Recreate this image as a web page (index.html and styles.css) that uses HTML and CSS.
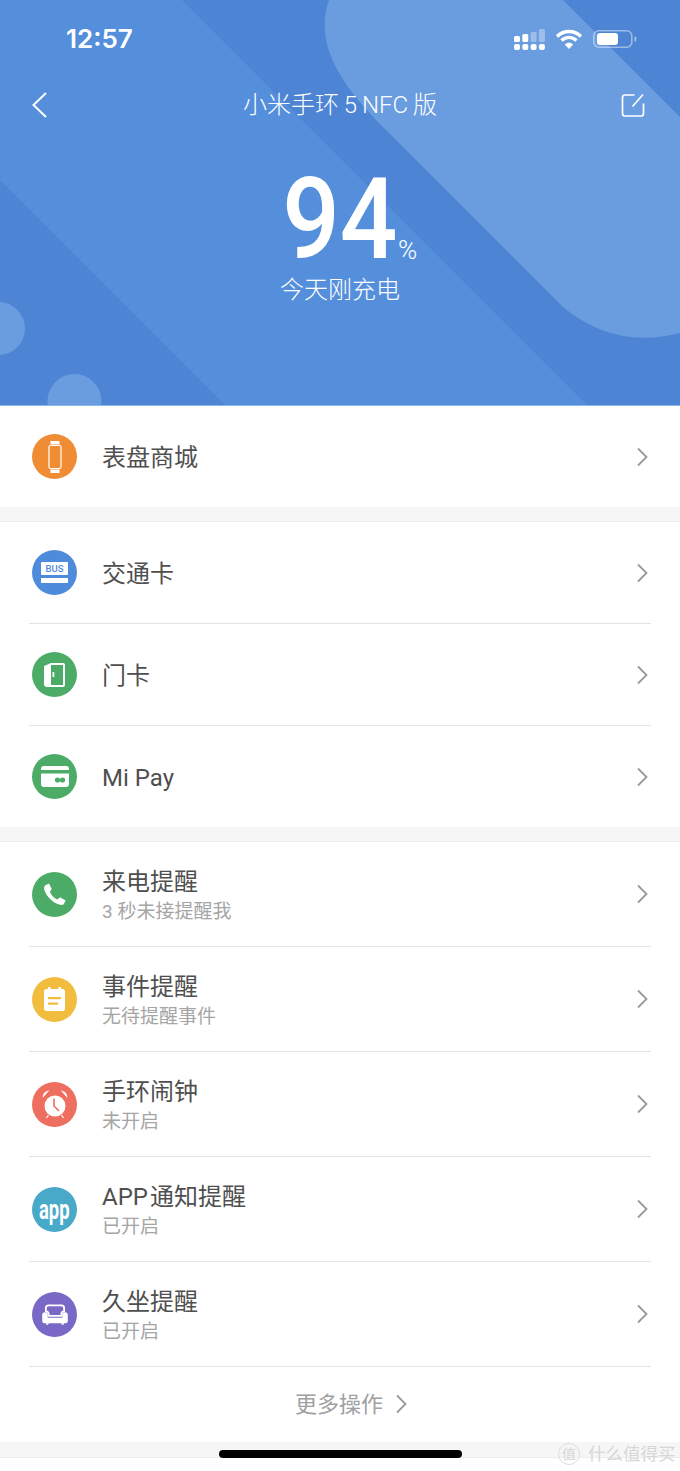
FILE: index.html
```html
<!DOCTYPE html>
<html lang="zh-CN">
<head>
    <meta charset="UTF-8">
    <meta name="viewport" content="width=device-width, initial-scale=1.0">
    <title>小米手环5 NFC版</title>
    <link rel="stylesheet" href="styles.css">
</head>
<body>

    <header class="hero">
        <svg class="hero-bg" width="680" height="405" viewBox="0 0 680 405">
            <rect width="680" height="405" fill="#4d84d3"/>
            <path d="M0 0H182L587 405H225L0 180Z" fill="#558fdc"/>
            <path d="M329 0H563L680 117V333Q615 350 563 307L385 129C335 80 315 40 329 0Z" fill="#6a9ce0"/>
            <circle cx="-1.500" cy="328.500" r="26.500" fill="#6a9ce0"/>
            <circle cx="74.500" cy="401" r="27" fill="#6a9ce0"/>
        </svg>

        <div class="status-bar">
            <span class="time">12:57</span>
            <div class="status-icons">
                <svg width="31" height="21" viewBox="0 0 31 21">
                    <g fill="#fff">
                        <rect x="0" y="7" width="6" height="6" rx="1.500"/>
                        <rect x="8.300" y="5" width="6" height="8" rx="1.500"/>
                        <rect x="0" y="15" width="6" height="6" rx="2"/>
                        <rect x="8.300" y="15" width="6" height="6" rx="2"/>
                        <rect x="16.600" y="15" width="6" height="6" rx="2"/>
                        <rect x="24.900" y="15" width="6" height="6" rx="2"/>
                    </g>
                    <g fill="#fff" opacity="0.35">
                        <rect x="16.600" y="3" width="6" height="10" rx="1.500"/>
                        <rect x="24.900" y="0" width="6" height="13" rx="1.500"/>
                    </g>
                </svg>
                <svg width="28" height="20" viewBox="0 0 28 20">
                    <path d="M2 7.500C9 .8 19 .8 26 7.500M6.500 11.500C11 7.300 17 7.300 21.500 11.500" fill="none" stroke="#fff" stroke-width="3.400"/>
                    <path d="M14 20L9.800 15.400C12.200 13.300 15.800 13.300 18.200 15.400Z" fill="#fff"/>
                </svg>
                <svg width="44" height="18" viewBox="0 0 44 18">
                    <rect x="0.800" y="0.800" width="38" height="16.400" rx="5" fill="none" stroke="#fff" stroke-opacity="0.45" stroke-width="1.600"/>
                    <rect x="4" y="3" width="21" height="12" rx="3" fill="#fff"/>
                    <rect x="41.500" y="6.500" width="1.800" height="5" rx="0.900" fill="#fff" fill-opacity="0.5"/>
                </svg>
            </div>
        </div>

        <nav class="nav-bar">
            <svg class="nav-back" width="24" height="28" viewBox="0 0 24 28">
                <path d="M16 2L3.500 14L16 26" fill="none" stroke="#fff" stroke-width="2"/>
            </svg>
            <span class="nav-title">小米手环 5 NFC 版</span>
            <svg class="nav-edit" width="24" height="24" viewBox="0 0 24 24">
                <path d="M13.500 2H4Q1.500 2 1.500 4.500V20.500Q1.500 23 4 23H20Q22.500 23 22.500 20.500V10.500" fill="none" stroke="#fff" stroke-width="1.700"/>
                <path d="M11.500 13.500L22 1.500" fill="none" stroke="#fff" stroke-width="1.700"/>
            </svg>
        </nav>

        <div class="battery">
            <div class="battery-value"><span class="battery-digits">94</span><span class="battery-unit">%</span></div>
            <div class="battery-label">今天刚充电</div>
        </div>
    </header>

    <section class="group group-first">
        <div class="row row-short">
            <span class="icon icon-orange">
                <svg width="14" height="32" viewBox="0 0 14 32">
                    <path d="M2.500 0H11.500V3.500H2.500ZM2.500 28.500H11.500V32H2.500Z" fill="#fff"/>
                    <rect x="1" y="4.500" width="12" height="23" rx="1.500" fill="none" stroke="#fff" stroke-width="1.200"/>
                </svg>
            </span>
            <span class="title">表盘商城</span>
            <svg class="chevron" width="12" height="20" viewBox="0 0 12 20"><path d="M2 1.500L10.500 10L2 18.500"/></svg>
        </div>
    </section>

    <section class="group">
        <div class="row row-short">
            <span class="icon icon-blue">
                <svg width="27" height="21" viewBox="0 0 27 21">
                    <rect width="27" height="13" rx="1" fill="#fff"/>
                    <rect y="16" width="27" height="5" fill="#fff"/>
                    <text class="bus-text" x="13.500" y="10">BUS</text>
                </svg>
            </span>
            <span class="title">交通卡</span>
            <svg class="chevron" width="12" height="20" viewBox="0 0 12 20"><path d="M2 1.500L10.500 10L2 18.500"/></svg>
        </div>
        <div class="row row-short">
            <span class="icon icon-green">
                <svg width="21" height="24" viewBox="0 0 21 24">
                    <path d="M7 0H19Q21 0 21 2V22Q21 24 19 24H3Q0 24 0 21V3Z" fill="#fff"/>
                    <path d="M7 2H19V22H7Z" fill="#4bab67"/>
                    <rect x="8.500" y="9" width="1.800" height="5" fill="#fff"/>
                </svg>
            </span>
            <span class="title">门卡</span>
            <svg class="chevron" width="12" height="20" viewBox="0 0 12 20"><path d="M2 1.500L10.500 10L2 18.500"/></svg>
        </div>
        <div class="row row-short">
            <span class="icon icon-green">
                <svg width="28" height="21" viewBox="0 0 28 21">
                    <path d="M3 0H25Q28 0 28 3V4H0V3Q0 0 3 0ZM0 7.500H28V18Q28 21 25 21H3Q0 21 0 18Z" fill="#fff"/>
                    <circle cx="16.500" cy="14" r="2.600" fill="#4bab67"/>
                    <circle cx="21.500" cy="14" r="2.600" fill="#4bab67"/>
                </svg>
            </span>
            <span class="title">Mi Pay</span>
            <svg class="chevron" width="12" height="20" viewBox="0 0 12 20"><path d="M2 1.500L10.500 10L2 18.500"/></svg>
        </div>
    </section>

    <section class="group">
        <div class="row">
            <span class="icon icon-green">
                <svg width="24" height="24" viewBox="0 0 26 26">
                    <path d="M6.500 1.500L9.500 7.500L7.500 10.500C9 14.500 12 17.500 15.500 19L18.500 16.500L24.500 20L22.500 24C21.500 25 19.500 25 17.500 24.500C9.500 22 4 15.500 1.500 9C1 6.500 1 5 2.500 3.500Z" fill="#fff"/>
                </svg>
            </span>
            <div class="text">
                <span class="title">来电提醒</span>
                <span class="sub">3 秒未接提醒我</span>
            </div>
            <svg class="chevron" width="12" height="20" viewBox="0 0 12 20"><path d="M2 1.500L10.500 10L2 18.500"/></svg>
        </div>
        <div class="row">
            <span class="icon icon-yellow">
                <svg width="21" height="24" viewBox="0 0 21 24">
                    <path d="M2.500 2H4V0H6.500V2H14.500V0H17V2H18.500Q21 2 21 4.500V21.500Q21 24 18.500 24H2.500Q0 24 0 21.500V4.500Q0 2 2.500 2Z" fill="#fff"/>
                    <rect x="4" y="10" width="13" height="2.200" fill="#f2bd3e"/>
                    <rect x="4" y="15.500" width="10" height="2.200" fill="#f2bd3e"/>
                </svg>
            </span>
            <div class="text">
                <span class="title">事件提醒</span>
                <span class="sub">无待提醒事件</span>
            </div>
            <svg class="chevron" width="12" height="20" viewBox="0 0 12 20"><path d="M2 1.500L10.500 10L2 18.500"/></svg>
        </div>
        <div class="row">
            <span class="icon icon-red">
                <svg width="26" height="29" viewBox="0 0 26 29">
                    <circle cx="13" cy="16" r="10.500" fill="#fff"/>
                    <path d="M1.500 6Q2 2.500 5.500 1.500ZM24.500 6Q24 2.500 20.500 1.500ZM6.500 25L4.500 28M19.500 25L21.500 28" fill="#fff" stroke="#fff" stroke-width="1.200"/>
                    <path d="M12 8.500V16L17 21" fill="none" stroke="#ee6f5f" stroke-width="1.600"/>
                </svg>
            </span>
            <div class="text">
                <span class="title">手环闹钟</span>
                <span class="sub">未开启</span>
            </div>
            <svg class="chevron" width="12" height="20" viewBox="0 0 12 20"><path d="M2 1.500L10.500 10L2 18.500"/></svg>
        </div>
        <div class="row">
            <span class="icon icon-teal"><span class="app-text">app</span></span>
            <div class="text">
                <span class="title title-tight">APP 通知提醒</span>
                <span class="sub">已开启</span>
            </div>
            <svg class="chevron" width="12" height="20" viewBox="0 0 12 20"><path d="M2 1.500L10.500 10L2 18.500"/></svg>
        </div>
        <div class="row">
            <span class="icon icon-purple">
                <svg width="26" height="21" viewBox="0 0 28 23">
                    <path d="M7 1.500H21Q24 1.500 24 4.500V8Q21 8 21 11V13H7V11Q7 8 4 8V4.500Q4 1.500 7 1.500Z" fill="none" stroke="#fff" stroke-width="2"/>
                    <path d="M0 12Q0 9 3 9Q6 9 6 12V15H22V12Q22 9 25 9Q28 9 28 12V19Q28 21 26 21H2Q0 21 0 19Z" fill="#fff"/>
                    <path d="M4 21H8L5 23.500ZM24 21H20L23 23.500Z" fill="#fff"/>
                </svg>
            </span>
            <div class="text">
                <span class="title">久坐提醒</span>
                <span class="sub">已开启</span>
            </div>
            <svg class="chevron" width="12" height="20" viewBox="0 0 12 20"><path d="M2 1.500L10.500 10L2 18.500"/></svg>
        </div>
        <div class="more">
            <span class="more-label">更多操作</span>
            <svg class="chevron" width="12" height="20" viewBox="0 0 12 20"><path d="M2 1.500L10.500 10L2 18.500"/></svg>
        </div>
    </section>

    <div class="bottom-gap"></div>
    <div class="home-bar"></div>
    <div class="watermark"><span class="watermark-mark">值</span>什么值得买</div>

</body>
</html>
```

FILE: styles.css
```css
body {
    font-family: Roboto, "Noto Sans CJK SC", sans-serif;
    background-color: #ffffff;
    margin: 0;
    width: 680px;
    height: 1471px;
    overflow: hidden;
    position: relative;
    color: #4a4a4a;
}

.hero {
    position: relative;
    height: 405px;
    color: #ffffff;
    border-bottom: 1px solid #8fb6ea;
}

.hero-bg {
    position: absolute;
    top: 0;
    left: 0;
}

.status-bar,
.nav-bar,
.battery {
    position: relative;
}

.status-bar {
    display: flex;
    justify-content: space-between;
    align-items: center;
    height: 22px;
    padding: 28px 43px 0 66px;
}

.time {
    font-family: Inter, "Liberation Sans", sans-serif;
    font-size: 26px;
    font-weight: 600;
    line-height: 22px;
}

.status-icons {
    display: flex;
    align-items: center;
    gap: 10px;
}

.nav-bar {
    display: grid;
    grid-template-columns: 1fr auto 1fr;
    align-items: center;
    height: 30px;
    padding: 0 30px;
    margin-top: 40px;
}

.nav-title {
    font-size: 24px;
    font-weight: 300;
    line-height: 30px;
    word-spacing: -1px;
}

.nav-edit {
    justify-self: end;
    margin-right: 5px;
}

.battery {
    margin-top: 44px;
    text-align: center;
}

.battery-value {
    position: relative;
    font-size: 114px;
    font-weight: 500;
    line-height: 110px;
}

.battery-digits {
    display: inline-block;
    transform: scaleX(0.89);
}

.battery-unit {
    position: absolute;
    left: calc(50% + 58px);
    bottom: 12px;
    font-size: 26px;
    font-weight: 300;
    line-height: 24px;
}

.battery-label {
    font-size: 24px;
    font-weight: 300;
    line-height: 30px;
    margin-top: 1px;
}

.group {
    background-color: #ffffff;
    border-top: 1px solid #ededed;
    margin-top: 14px;
    box-shadow: 0 -14px 0 #f6f6f6;
}

.group-first {
    border-top: 0;
    margin-top: 0;
    box-shadow: none;
}

.row {
    display: flex;
    align-items: center;
    height: 104px;
    margin: 0 29px;
    border-bottom: 1px solid #e4e4e4;
}

.row-short {
    height: 101px;
}

.group-first .row,
.group .row-short:last-child {
    border-bottom: 0;
}

.icon {
    width: 45px;
    height: 45px;
    border-radius: 50%;
    display: flex;
    align-items: center;
    justify-content: center;
    flex-shrink: 0;
    margin: 0 25px 0 3px;
}

.icon-orange { background-color: #f08d34; }
.icon-blue { background-color: #4f8bdb; }
.icon-green { background-color: #4bab67; }
.icon-yellow { background-color: #f2bd3e; }
.icon-red { background-color: #ee6f5f; }
.icon-teal { background-color: #48a9c8; }
.icon-purple { background-color: #7a68c6; }

.bus-text {
    font-size: 9.500px;
    font-weight: 500;
    text-anchor: middle;
    fill: #4f8bdb;
}

.app-text {
    font-size: 28px;
    font-weight: 700;
    color: #ffffff;
    line-height: 45px;
    transform: scaleX(0.66);
}

.text {
    display: flex;
    flex-direction: column;
    padding-top: 2px;
}

.title {
    font-size: 24px;
    line-height: 30px;
    padding-top: 2px;
    font-weight: 400;
    color: #4f4f4f;
}

.title-tight {
    word-spacing: -4px;
}

.sub {
    font-size: 19px;
    line-height: 27px;
    margin-top: 1px;
    color: #a5a5a5;
}

.chevron {
    flex-shrink: 0;
    margin: 0 3px 0 auto;
    fill: none;
    stroke: #999999;
    stroke-width: 1.800;
}

.more {
    display: flex;
    justify-content: center;
    align-items: center;
    gap: 12px;
    height: 75px;
    padding: 0 0 2px 22px;
    box-sizing: border-box;
    font-size: 22px;
    color: #a0a0a0;
}

.more-label {
    margin-bottom: 3px;
}

.more .chevron {
    margin: 0;
}

.bottom-gap {
    height: 15px;
    background-color: #f6f6f6;
    border-bottom: 1px solid #ededed;
}

.home-bar {
    position: absolute;
    left: 219px;
    top: 1450px;
    width: 243px;
    height: 8px;
    border-radius: 4px;
    background-color: #000000;
}

.watermark {
    position: absolute;
    left: 558px;
    top: 1441px;
    display: flex;
    align-items: center;
    gap: 8px;
    font-size: 17.500px;
    line-height: 26px;
    color: #d6d6d6;
}

.watermark-mark {
    width: 20px;
    height: 20px;
    border: 1px solid #dddddd;
    border-radius: 50%;
    font-size: 14px;
    line-height: 20px;
    text-align: center;
}
```
